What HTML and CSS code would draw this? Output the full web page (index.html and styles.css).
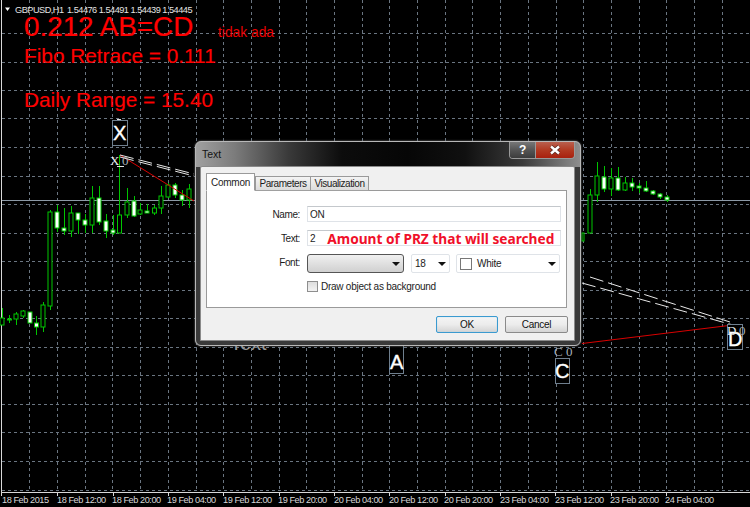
FILE: index.html
```html
<!DOCTYPE html>
<html lang="en">
<head>
<meta charset="utf-8">
<title>GBPUSD,H1 Text</title>
<link rel="stylesheet" href="styles.css">
</head>
<body>
<main class="stage">
  <svg class="chart" viewBox="0 0 750 507" width="750" height="507" aria-label="GBPUSD H1 chart">
    <path class="grid" d="M29.5 0V490M57.5 0V490M85.5 0V490M112.5 0V490M140.5 0V490M168.5 0V490M196.5 0V490M223.5 0V490M251.5 0V490M279.5 0V490M306.5 0V490M334.5 0V490M362.5 0V490M389.5 0V490M417.5 0V490M445.5 0V490M472.5 0V490M500.5 0V490M528.5 0V490M556.5 0V490M583.5 0V490M611.5 0V490M639.5 0V490M666.5 0V490M694.5 0V490M722.5 0V490"/>
    <path class="grid" d="M2 33.5H750M2 62.5H750M2 90.5H750M2 118.5H750M2 147.5H750M2 176.5H750M2 204.5H750M2 233.5H750M2 261.5H750M2 290.5H750M2 318.5H750M2 347.5H750M2 375.5H750M2 404.5H750M2 432.5H750M2 461.5H750M2 490.5H750"/>
    <path class="price" d="M2 200.5H750"/>
    <path class="axis" d="M1.5 0V496M1 492.5H750M57.5 492V496M113.5 492V496M168.5 492V496M223.5 492V496M279.5 492V496M334.5 492V496M389.5 492V496M445.5 492V496M500.5 492V496M555.5 492V496M611.5 492V496M666.5 492V496"/>

    <path class="wick" d="M2.5 308V325M9.5 315V323M16.5 312V325M23.5 310V318M36.5 316V335M43.5 302V332M50.5 210V310M57.5 205V232M64.5 208V235M71.5 206V237M78.5 213V234M85.5 214V233M92.5 186V233M99.5 186V225M106.5 214V238M113.5 215V235M119.5 155V233M127.5 188V218M134.5 196V217M140.5 203V215M147.5 204V213M154.5 205V215M161.5 186V214M168.5 183V198M175.5 183V198M182.5 190V206M189.5 184V208M590.5 189V233M597.5 162V202M604.5 166V192M611.5 168V196M618.5 167V191M625.5 177V191M632.5 178V191M639.5 183V193M646.5 181V192M653.5 190V195M660.5 193V199M667.5 195V202"/>
    <g class="hollow">
      <rect x="0" y="318" width="4" height="7"/><rect x="7.5" y="319" width="4" height="1"/><rect x="14" y="314" width="4" height="5"/><rect x="21" y="311" width="4" height="5"/><rect x="41" y="305" width="4" height="22"/><rect x="48" y="212" width="4" height="94"/><rect x="69" y="213" width="4" height="18"/><rect x="90" y="198" width="4" height="27"/><rect x="117.5" y="215" width="4" height="18"/><rect x="125" y="202" width="4" height="13"/><rect x="138" y="210" width="4" height="4"/><rect x="152.5" y="208" width="4" height="5"/><rect x="159" y="196" width="4" height="12"/><rect x="166" y="185" width="4" height="12"/><rect x="187" y="189" width="4" height="11"/><rect x="588" y="195" width="4" height="38"/><rect x="595" y="176" width="4" height="19"/><rect x="609" y="178" width="4" height="11"/><rect x="623" y="183" width="4" height="7"/><rect x="582" y="233" width="2" height="8"/>
    </g>
    <g class="solid">
      <rect x="28" y="312" width="4" height="11"/><rect x="34.5" y="323" width="4" height="4"/><rect x="55" y="212" width="4" height="16"/><rect x="62" y="228" width="4" height="3"/><rect x="76" y="213" width="4" height="7"/><rect x="83" y="220" width="4" height="5"/><rect x="97" y="198" width="4" height="24"/><rect x="104" y="221" width="4" height="10"/><rect x="111" y="230" width="4" height="3"/><rect x="132" y="201" width="4" height="15"/><rect x="145" y="211" width="4" height="2"/><rect x="173" y="185" width="4" height="10"/><rect x="180" y="195" width="4" height="5"/><rect x="602" y="177" width="4" height="12"/><rect x="616" y="178" width="4" height="12"/><rect x="630" y="183" width="4" height="4"/><rect x="637" y="186" width="4" height="2"/><rect x="644" y="188" width="4" height="3"/><rect x="651" y="191" width="4" height="3"/><rect x="658" y="194" width="4" height="3"/><rect x="665" y="197" width="4" height="3"/>
    </g>

    <path class="trend-red" d="M120 155L194 201M582 343.500L733 325"/>
    <path class="trend-white" d="M120 155L194 174M120 157L194 176M590 277L733 323M582 283L733 325"/>

    <path class="arrow-mark" d="M5 7.500H10L7.500 11Z"/>
    <text class="t-head" x="15" y="13">GBPUSD,H1</text>
    <text class="t-head" x="67" y="13">1.54476 1.54491 1.54439 1.54445</text>

    <text class="t-big" x="24" y="36">0.212 AB=CD</text>
    <text class="t-note" x="218" y="37">tidak ada</text>
    <text class="t-mid" x="24" y="63">Fibo Retrace = 0.111</text>
    <text class="t-mid" x="24" y="107">Daily Range = 15.40</text>

    <path class="tick" d="M117 119.500H121M117 166.500H124"/>
    <rect class="mark-box" x="112.500" y="120.500" width="15" height="25"/>
    <text class="t-mark" x="113" y="140">X</text>
    <text class="t-ser" x="110" y="165">X</text>
    <text class="t-ser-dim" x="122" y="165">0</text>

    <text class="t-faint" x="230" y="350">Text</text>

    <rect class="mark-box" x="389.500" y="340.500" width="14" height="33"/>
    <text class="t-mark" x="390" y="369">A</text>

    <text class="t-ser-dim" x="554" y="356">C</text>
    <text class="t-ser-dim" x="566" y="356">0</text>
    <rect class="mark-box" x="555.500" y="358.500" width="14" height="25"/>
    <text class="t-mark" x="555" y="378">C</text>

    <rect class="mark-box" x="727.500" y="324.500" width="15" height="25"/>
    <text class="t-mark" x="728" y="346">D</text>
    <text class="t-ser" x="727" y="335">D</text>
    <text class="t-ser-dim" x="739" y="335">0</text>

    <text class="t-axis" x="2" y="503">18 Feb 2015</text>
    <text class="t-axis" x="57" y="503">18 Feb 12:00</text>
    <text class="t-axis" x="112" y="503">18 Feb 20:00</text>
    <text class="t-axis" x="167" y="503">19 Feb 04:00</text>
    <text class="t-axis" x="223" y="503">19 Feb 12:00</text>
    <text class="t-axis" x="278" y="503">19 Feb 20:00</text>
    <text class="t-axis" x="334" y="503">20 Feb 04:00</text>
    <text class="t-axis" x="389" y="503">20 Feb 12:00</text>
    <text class="t-axis" x="444" y="503">20 Feb 20:00</text>
    <text class="t-axis" x="500" y="503">23 Feb 04:00</text>
    <text class="t-axis" x="555" y="503">23 Feb 12:00</text>
    <text class="t-axis" x="610" y="503">23 Feb 20:00</text>
    <text class="t-axis" x="665" y="503">24 Feb 04:00</text>
  </svg>

  <section class="dialog">
    <header class="titlebar">
      <span class="title">Text</span>
      <div class="winbtns">
        <span class="winbtn help">?</span>
        <span class="winbtn close">
          <svg viewBox="0 0 12 10" width="12" height="10"><path class="close-x-o" d="M2 1.500L10 8.500M10 1.500L2 8.500"/><path class="close-x" d="M2 1.500L10 8.500M10 1.500L2 8.500"/></svg>
        </span>
      </div>
    </header>
    <div class="client">
      <nav class="tabs">
        <span class="tab active">Common</span>
        <span class="tab">Parameters</span>
        <span class="tab">Visualization</span>
      </nav>
      <div class="pane">
        <div class="form">
          <label class="lab">Name:</label>
          <div class="input">ON</div>
          <label class="lab">Text:</label>
          <div class="input text-input"><span>2</span><span class="hint">Amount of PRZ that will searched</span></div>
          <label class="lab lab-font">Font:</label>
          <div class="combos">
            <div class="combo font-combo"><i class="caret"></i></div>
            <div class="combo size-combo"><span>18</span><i class="caret"></i></div>
            <div class="combo color-combo"><b class="swatch"></b><span class="color-name">White</span><i class="caret"></i></div>
          </div>
          <span></span>
          <div class="check-row"><b class="check"></b><span>Draw object as background</span></div>
        </div>
      </div>
      <div class="actions">
        <span class="btn ok">OK</span>
        <span class="btn cancel">Cancel</span>
      </div>
    </div>
  </section>
</main>
</body>
</html>
```
FILE: styles.css
```css
* { box-sizing: border-box; }
html, body { margin: 0; padding: 0; background: #000; }
.stage { position: relative; width: 750px; height: 507px; overflow: hidden; background: #000; }
.chart { display: block; }

.grid { fill: none; stroke: #6a7581; stroke-width: 1; stroke-dasharray: 3 3; }
.price { fill: none; stroke: #8c99a6; stroke-width: 1; }
.axis { fill: none; stroke: #d8d8d8; stroke-width: 1; }
.wick { fill: none; stroke: #00c400; stroke-width: 1; }
.hollow rect { fill: #000; stroke: #00c800; stroke-width: 1; }
.solid rect { fill: #fff; stroke: #00c800; stroke-width: 1; }
.trend-red { fill: none; stroke: #d80000; stroke-width: 1; }
.trend-white { fill: none; stroke: #e8e8e8; stroke-width: 1; stroke-dasharray: 14 5; }
.arrow-mark { fill: #fff; }
.tick { fill: none; stroke: #e0e0e0; stroke-width: 1; }
.mark-box { fill: #000; stroke: #6f7f8e; stroke-width: 1; }

.chart text { font-family: "Liberation Sans", Arial, sans-serif; }
.chart .t-head { font-size: 9.2px; letter-spacing: -0.5px; fill: #e4e4e4; }
.chart .t-big { font-size: 27.8px; fill: #f00; stroke: #f00; stroke-width: 0.2px; }
.chart .t-note { font-size: 13.8px; fill: #e80000; }
.chart .t-mid { font-size: 20.8px; fill: #f00; stroke: #f00; stroke-width: 0.15px; }
.chart .t-mark { font-size: 20px; fill: #fff; stroke: #fff; stroke-width: 0.4px; }
.chart .t-faint { font-size: 20px; fill: #999; }
.chart .t-ser { font-family: "Liberation Serif", serif; font-size: 13px; fill: #e8eef0; }
.chart .t-ser-dim { font-family: "Liberation Serif", serif; font-size: 13px; fill: #a8b0b8; }
.chart .t-axis { font-size: 9.2px; letter-spacing: -0.45px; fill: #d8d8d8; }

.dialog {
  position: absolute; left: 195px; top: 141px; width: 386px; height: 205px;
  display: flex; flex-direction: column;
  padding: 0 5px 4px 4px;
  border: 1px solid #b8b8b8; border-radius: 6px;
  background:
    linear-gradient(90deg, #a0a0a0 0, #7c7c7c 10%, #3a3a3a 24%, #0c0c0c 38%, #060606 55%, #101010 70%, #3a3a3a 85%, #8e8e8e 100%) top / 100% 25px no-repeat,
    #3a3a3a;
  box-shadow: 0 0 2px #888;
  font-family: "Liberation Sans", Arial, sans-serif; font-size: 10px; letter-spacing: -0.25px; color: #1c1c1c;
}
.titlebar { flex: none; height: 24px; display: flex; justify-content: space-between; align-items: flex-start; }
.title { margin: 6px 0 0 2px; font-size: 10.5px; letter-spacing: 0; color: #141414; }
.winbtns { display: flex; height: 17px; border: 1px solid #9a9a9a; border-top: 0; border-radius: 0 0 4px 4px; overflow: hidden; }
.winbtn { display: flex; align-items: center; justify-content: center; }
.help { width: 26px; background: linear-gradient(#777, #555 50%, #3c3c3c); color: #fff; font-weight: 700; font-size: 12px; border-right: 1px solid #999; }
.close { width: 38px; background: linear-gradient(#b9604e, #b23a22 50%, #a8200e); }
.close-x-o { fill: none; stroke: #5a2a20; stroke-width: 4; }
.close-x { fill: none; stroke: #fff; stroke-width: 2.4; }

.client {
  flex: 1; display: flex; flex-direction: column;
  padding: 7px 7px 0 5px;
  background: #f0f0f0; border: 1px solid #8a8a8a; border-radius: 2px 2px 0 0;
}
.tabs { display: flex; align-items: flex-end; height: 17px; margin-bottom: -1px; position: relative; letter-spacing: -0.45px; }
.tab { display: flex; align-items: center; justify-content: center; height: 15px; width: 56px; margin-left: -1px; background: linear-gradient(#f4f4f4, #dcdcdc); border: 1px solid #9a9a9a; border-bottom: 1px solid #a0a0a0; color: #1c1c1c; }
.tab:nth-child(2) { margin-left: 0; }
.tab:nth-child(3) { width: 59px; }
.tab.active { width: 49px; margin-left: 0; height: 18px; background: #fff; border-bottom-color: #fff; position: relative; z-index: 1; letter-spacing: -0.25px; }
.pane { flex: none; height: 118px; padding: 15px 0 0 0; background: #fff; border: 1px solid #9a9a9a; }
.form { display: grid; grid-template-columns: 93px 254px; grid-template-rows: 16px 16px 19px 12px; column-gap: 7px; row-gap: 8px; }
.lab { text-align: right; align-self: center; letter-spacing: -0.4px; }
.lab-font { align-self: start; margin-top: 3px; }
.input { display: flex; align-items: center; padding: 0 2px; background: #fff; border: 1px solid #dfe3e8; border-top-color: #c4c8cc; }
.text-input { gap: 12px; }
.hint { font-family: "Noto Sans", sans-serif; font-weight: 700; font-size: 13.7px; letter-spacing: 0; color: #f0102a; white-space: nowrap; }
.combos { display: flex; gap: 7px; width: 254px; }
.combo { position: relative; display: flex; align-items: center; padding: 0 2px; background: #fff; border: 1px solid #dfe3e8; border-radius: 2px; }
.font-combo { width: 97px; background: linear-gradient(#f0f0f0, #d0d0d0); border: 1px solid #555; border-radius: 3px; justify-content: flex-end; padding-right: 3px; }
.size-combo { width: 39px; justify-content: space-between; padding: 0 3px; }
.color-combo { width: 104px; margin-left: -1px; justify-content: flex-start; padding: 0 3px; }
.swatch { flex: none; width: 12px; height: 12px; background: #fff; border: 1px solid #777; }
.color-name { margin-left: 5px; flex: 1; }
.caret { flex: none; width: 0; height: 0; border-left: 4px solid transparent; border-right: 4px solid transparent; border-top: 4px solid #111; }
.check-row { display: flex; align-items: flex-start; gap: 3px; line-height: 11px; }
.check { flex: none; width: 11px; height: 11px; background: linear-gradient(#ddd, #f2f2f2); border: 1px solid #8e8e8e; }
.actions { display: flex; justify-content: flex-end; gap: 7px; margin: 8px -1px 0 0; }
.btn { display: flex; align-items: center; justify-content: center; height: 17px; background: linear-gradient(#f4f4f4, #ececec 50%, #d4d4d4); border: 1px solid #8a8a8a; border-radius: 2px; color: #111; }
.ok { width: 62px; border-color: #3a9ad0; box-shadow: inset 0 0 1px #7cc8f0; }
.cancel { width: 63px; }
```
